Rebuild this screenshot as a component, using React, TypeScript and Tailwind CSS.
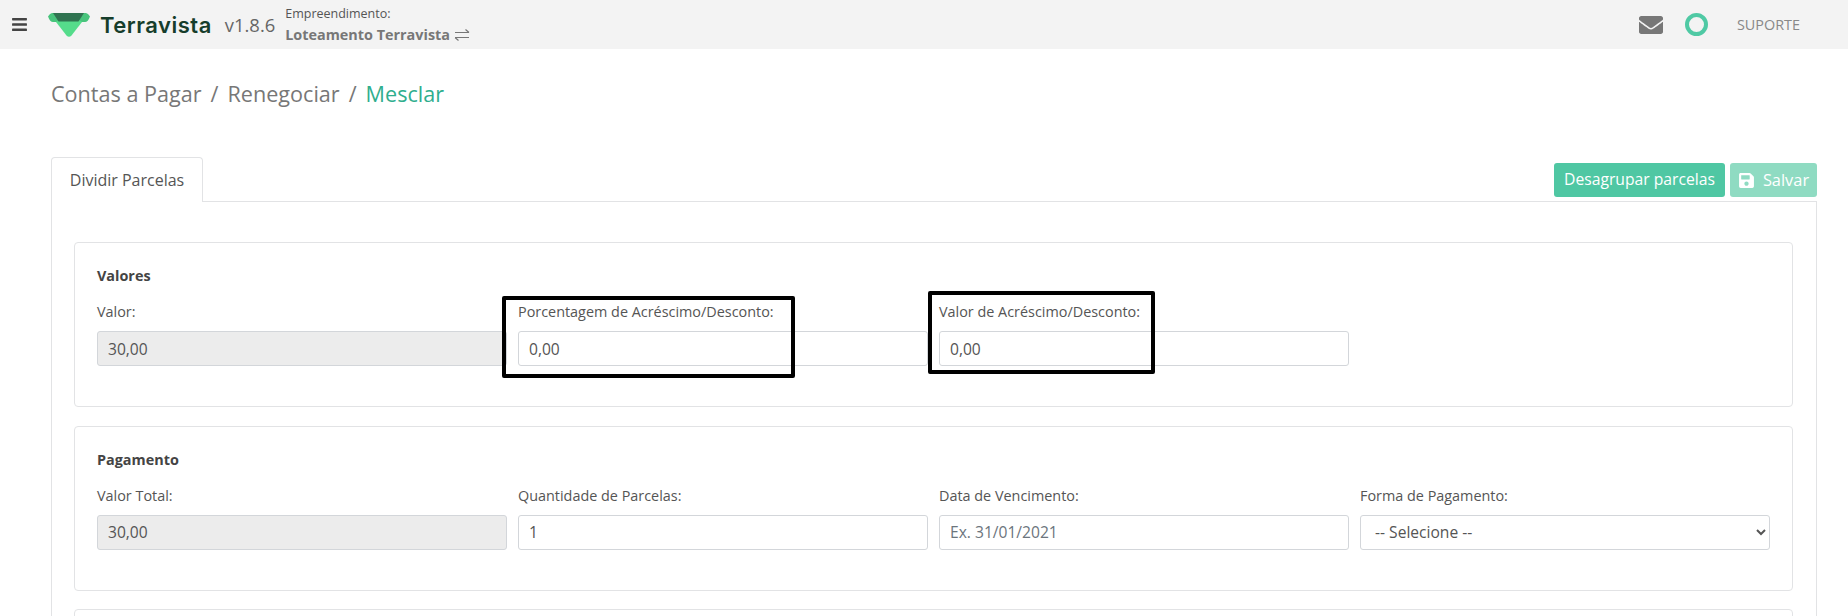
import { FaBars, FaEnvelope, FaSave } from 'react-icons/fa';

function Field({ label, value, disabled, placeholder }: { label: string; value?: string; disabled?: boolean; placeholder?: string }) {
  return (
    <div>
      <label className="mb-[9px] block h-[20px] text-[14.4px] leading-[20px] text-[#555]">{label}</label>
      <input
        readOnly
        value={value}
        placeholder={placeholder}
        className={`block h-[35px] w-full rounded-[3px] border border-[#d3d6da] px-[10px] text-[15.6px] text-[#555] placeholder:text-[#6c757d] ${disabled ? 'bg-[#ececec]' : 'bg-white'}`}
      />
    </div>
  );
}

function Card({ title, children }: { title: string; children: React.ReactNode }) {
  return (
    <section className="mb-[18.5px] h-[165px] rounded-[4px] border border-[#e2e3e5] px-[22px] pt-[23px]">
      <h5 className="mb-[16px] h-[20px] text-[14.4px] leading-[20px] font-bold text-[#444]">{title}</h5>
      <div className="grid grid-cols-4 gap-x-[11px]">{children}</div>
    </section>
  );
}

function Logo() {
  return (
    <svg width="44" height="26" viewBox="0 0 44 26" className="ml-[19px]">
      <path d="M5 1H39Q41 1 43 4.500 41 10 38 10H6Q3 10 1 4.500 3 1 5 1Z" fill="#48c47c" />
      <path d="M9 10 19.500 23.500Q22 26 24.500 23.500L35 10 31 7H13Z" fill="#55dc8b" />
      <path d="M6 1H37L31.500 9.500H11.500Z" fill="#2f7350" />
    </svg>
  );
}

export default function App() {
  return (
    <div className="relative h-[616px] w-[1848px] overflow-hidden bg-white font-['Open_Sans',sans-serif]">
      <header className="flex h-[49px] items-center bg-[#f3f3f3]">
        <FaBars className="ml-[11px] text-[17px] text-[#444]" />
        <Logo />
        <span className="ml-[9px] font-['Inter',sans-serif] text-[22px] leading-none font-semibold tracking-[0.5px] text-[#163d2b]">Terravista</span>
        <span className="ml-[13px] text-[18.4px] text-[#666]">v1.8.6</span>
        <div className="ml-[10px] flex flex-col">
          <span className="h-[20px] text-[12.5px] leading-[20px] text-[#555]">Empreendimento:</span>
          <span className="flex h-[22px] items-center gap-[4px] text-[14.4px] leading-[22px] font-bold text-[#777]">
            Loteamento Terravista
            <svg width="16" height="12" viewBox="0 0 16 12" fill="none" stroke="#777" strokeWidth="1.200">
              <path d="M1 3.500H15M11.500 .5 15 3.500" />
              <path d="M15 8.500H1M4.500 11.500 1 8.500" />
            </svg>
          </span>
        </div>
        <div className="ml-auto flex items-center">
          <FaEnvelope className="text-[24px] text-[#777]" />
          <span className="ml-[22px] h-[23px] w-[23px] rounded-full border-[4px] border-[#4fc9a4]" />
          <span className="mr-[48px] ml-[29px] text-[14.4px] text-[#888]">SUPORTE</span>
        </div>
      </header>

      <main className="pr-[31px] pl-[51px]">
        <nav className="flex h-[108px] items-start gap-[9px] pt-[30px] text-[21.6px] leading-[30px] text-[#777]">
          <span>Contas a Pagar</span>
          <span>/</span>
          <span>Renegociar</span>
          <span>/</span>
          <span className="text-[#2fae8e]">Mesclar</span>
        </nav>

        <div className="flex items-end justify-between">
          <div className="relative z-10 -mb-px flex h-[45px] w-[152px] items-center justify-center rounded-t-[4px] border border-b-0 border-[#e2e3e5] bg-white text-[16px] text-[#555]">
            Dividir Parcelas
          </div>
          <div className="mb-[4px] flex gap-[5px]">
            <button className="h-[34px] w-[171px] rounded-[3px] bg-[#4fc7a3] text-[15.7px] text-white">Desagrupar parcelas</button>
            <button className="flex h-[34px] w-[87px] items-center justify-center gap-[8px] rounded-[3px] bg-[#8fdbc2] text-[16.4px] text-white">
              <FaSave className="text-[17px]" />
              Salvar
            </button>
          </div>
        </div>

        <div className="h-[500px] border border-[#e2e3e5] pt-[40px] pr-[23px] pl-[22px]">
          <Card title="Valores">
            <Field label="Valor:" value="30,00" disabled />
            <Field label="Porcentagem de Acréscimo/Desconto:" value="0,00" />
            <Field label="Valor de Acréscimo/Desconto:" value="0,00" />
          </Card>
          <Card title="Pagamento">
            <Field label="Valor Total:" value="30,00" disabled />
            <Field label="Quantidade de Parcelas:" value="1" />
            <Field label="Data de Vencimento:" placeholder="Ex. 31/01/2021" />
            <div>
              <label className="mb-[9px] block h-[20px] text-[14.4px] leading-[20px] text-[#555]">Forma de Pagamento:</label>
              <select className="block h-[35px] w-full rounded-[3px] border border-[#d3d6da] bg-white px-[10px] text-[15.6px] text-[#555]">
                <option>-- Selecione --</option>
              </select>
            </div>
          </Card>
          <section className="h-[100px] rounded-[4px] border border-[#e2e3e5]" />
        </div>
      </main>

      <div className="absolute top-[296px] left-[502px] h-[82px] w-[293px] rounded-[2px] border-[4px] border-black" />
      <div className="absolute top-[291px] left-[928px] h-[83px] w-[227px] rounded-[2px] border-[4px] border-black" />
    </div>
  );
}
